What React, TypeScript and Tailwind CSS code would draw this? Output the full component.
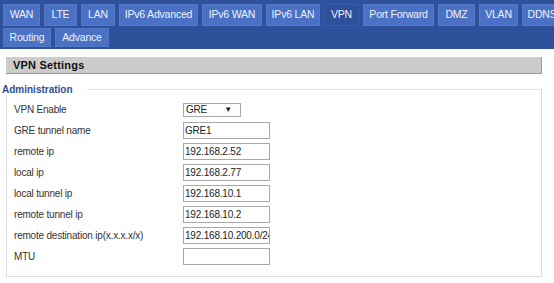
const font = { fontFamily: '"Liberation Sans", Arial, sans-serif' };

const row1 = [
  { name: 'WAN', w: 'w-[37px]' },
  { name: 'LTE', w: 'w-[33px]' },
  { name: 'LAN', w: 'w-[34px]' },
  { name: 'IPv6 Advanced', w: 'w-[79px]' },
  { name: 'IPv6 WAN', w: 'w-[60px]' },
  { name: 'IPv6 LAN', w: 'w-[54px]' },
  { name: 'VPN', w: 'w-[35px]', active: true },
  { name: 'Port Forward', w: 'w-[71px]' },
  { name: 'DMZ', w: 'w-[37px]' },
  { name: 'VLAN', w: 'w-[39px]' },
  { name: 'DDNS', w: 'w-[40px]' },
];

const row2 = [
  { name: 'Routing', w: 'w-[48px]' },
  { name: 'Advance', w: 'w-[54px]' },
];

const fields = [
  { label: 'GRE tunnel name', value: 'GRE1' },
  { label: 'remote ip', value: '192.168.2.52' },
  { label: 'local ip', value: '192.168.2.77' },
  { label: 'local tunnel ip', value: '192.168.10.1' },
  { label: 'remote tunnel ip', value: '192.168.10.2' },
  { label: 'remote destination ip(x.x.x.x/x)', value: '192.168.10.200.0/24' },
  { label: 'MTU', value: '' },
];

function Tab({ name, w, active }: { name: string; w: string; active?: boolean }) {
  return (
    <div
      className={
        'shrink-0 h-full flex items-center justify-center text-[10.5px] tracking-[-0.2px] text-[#eef2fb] ' +
        w +
        (active ? ' bg-[#2e4f9b] border border-[#3a5ca8]' : ' bg-[#4a71c4] border border-[#5278c8]')
      }
    >
      {name}
    </div>
  );
}

export default function App() {
  return (
    <div className="w-[554px] h-[283px] bg-white overflow-hidden text-[#333]" style={font}>
      {/* Tab bar */}
      <div className="bg-[#2f509b] h-[49px] pl-[3px] pt-[4px] flex flex-col gap-[2px] overflow-hidden">
        <div className="flex gap-[4px] h-[22px]">
          {row1.map((t) => (
            <Tab key={t.name} {...t} />
          ))}
        </div>
        <div className="flex gap-[4px] h-[19px]">
          {row2.map((t) => (
            <Tab key={t.name} {...t} />
          ))}
        </div>
      </div>

      <div className="pl-[6px] w-[542px] pt-[8px]">
        {/* Section header */}
        <div className="h-[17px] bg-[#cccccc] border-b border-r border-[#9a9a9a] flex items-center pl-[7px]">
          <span className="text-[11px] font-bold text-[#111] tracking-[0.2px]">VPN Settings</span>
        </div>
      </div>

      {/* Fieldset */}
      <div className="mt-[9px] w-[542px]">
        <div className="flex items-center h-[12px]">
          <span className="pl-[2px] text-[10px] font-bold text-[#2e4e92]">Administration</span>
          <div className="flex-1 ml-[14px] h-[1px] bg-[#e3e3e3]" />
          <div className="w-[1px] self-end h-[6px] bg-[#d6d6d6]" />
        </div>
        <div className="ml-[6px] border-l border-r border-b border-[#dedede] pt-[4px] pb-[9px] pl-[7px] text-[10px] tracking-[-0.2px]">
          <div className="flex items-center h-[21px]">
            <span className="w-[169px]">VPN Enable</span>
            <div className="w-[58px] h-[14px] border border-[#a9a9a9] flex items-center justify-between px-[2px] text-[#222]">
              <span>GRE</span>
              <span className="text-[8px] mr-[6px]">▼</span>
            </div>
          </div>
          {fields.map((f) => (
            <div key={f.label} className="flex items-center h-[21px]">
              <span className="w-[169px] whitespace-nowrap">{f.label}</span>
              <div className="w-[87px] h-[17px] border border-[#a9a9a9] flex items-center pl-[1px] overflow-hidden whitespace-nowrap text-[#222]">
                {f.value}
              </div>
            </div>
          ))}
        </div>
      </div>
    </div>
  );
}
